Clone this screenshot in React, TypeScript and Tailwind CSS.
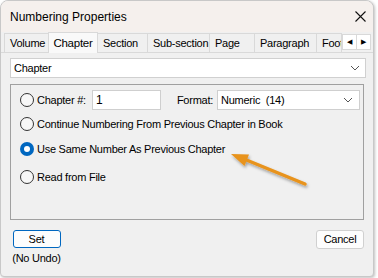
import React from "react";

const font = { fontFamily: '"Liberation Sans", Arial, sans-serif' };

function Radio({ checked }: { checked?: boolean }) {
  if (checked)
    return (
      <span className="w-[14px] h-[14px] rounded-full bg-[#0067c0] flex items-center justify-center shrink-0">
        <span className="w-[6px] h-[6px] rounded-full bg-white" />
      </span>
    );
  return <span className="w-[14px] h-[14px] rounded-full border border-[#333] bg-[#f7f7f7] shrink-0" />;
}

function Chevron() {
  return (
    <svg width="10" height="6" viewBox="0 0 10 6" className="shrink-0">
      <path d="M1 1 L5 5 L9 1" fill="none" stroke="#555" strokeWidth="1" />
    </svg>
  );
}

export default function App() {
  const tabs = [
    { t: "Volume", w: 45 },
    { t: "Chapter", w: 50, sel: true },
    { t: "Section", w: 51 },
    { t: "Sub-section", w: 63 },
    { t: "Page", w: 46 },
    { t: "Paragraph", w: 63 },
    { t: "Footnote", w: 26 },
  ];
  return (
    <div className="w-[378px] h-[278px] bg-white relative text-[11px] tracking-[-0.25px] text-black" style={font}>
      <div className="w-[374px] h-[277px] rounded-t-[8px] rounded-b-[4px] border border-[#c8c8c8] bg-[#f0f0f0] overflow-hidden flex flex-col shadow-[1px_1px_3px_rgba(0,0,0,0.25)] relative">
        {/* title bar */}
        <div className="h-[31px] bg-[#f5f0ed] flex items-center justify-between pl-[9px] pr-[7px] shrink-0">
          <span className="text-[12px] tracking-normal leading-none">Numbering Properties</span>
          <svg width="11" height="11" viewBox="0 0 11 11">
            <path d="M0.5 0.5 L10.5 10.5 M10.5 0.5 L0.5 10.5" stroke="#111" strokeWidth="1.1" />
          </svg>
        </div>
        {/* tabs */}
        <div className="relative h-[21px] shrink-0 flex items-end pl-[4px] border-b border-[#d9d9d9]">
          {tabs.map((tb) =>
            tb.sel ? (
              <div
                key={tb.t}
                style={{ width: tb.w }}
                className="h-[21px] shrink-0 -mb-px -ml-px bg-[#f9f9f9] border border-[#d9d9d9] border-b-0 flex items-start justify-center pt-[2px] overflow-hidden whitespace-nowrap relative z-10 text-[11.5px]"
              >
                {tb.t}
              </div>
            ) : (
              <div
                key={tb.t}
                style={{ width: tb.w }}
                className="h-[19px] shrink-0 bg-[#f0f0f0] border border-[#d9d9d9] border-b-0 -ml-px flex items-center pl-[5px] overflow-hidden whitespace-nowrap"
              >
                {tb.t}
              </div>
            )
          )}
          <div className="flex mb-[2px] shrink-0">
            <div className="w-[15px] h-[16px] bg-white border border-[#d9d9d9] flex items-center justify-center text-[7px]">◀</div>
            <div className="w-[15px] h-[16px] bg-white border border-[#d9d9d9] -ml-px flex items-center justify-center text-[7px]">▶</div>
          </div>
        </div>
        {/* panel */}
        <div className="flex flex-col px-[9px] pt-[5px]">
          <div className="h-[20px] w-[356px] bg-white border border-[#d0d0d0] flex items-center justify-between pl-[3px] pr-[5px]">
            <span>Chapter</span>
            <Chevron />
          </div>
          <div className="mt-[6px] w-[354px] h-[136px] border border-[#a0a0a0] flex flex-col pl-[9px] pt-[5px]">
            <div className="flex items-center h-[20px] whitespace-nowrap">
              <Radio />
              <span className="ml-[3px]">Chapter #:</span>
              <div className="ml-[6px] w-[69px] h-[20px] bg-white border border-[#cfcfcf] flex items-center pl-[3px] text-[12px]">1</div>
              <span className="ml-[16px]">Format:</span>
              <div className="ml-[4px] w-[143px] h-[20px] bg-white border border-[#cfcfcf] flex items-center justify-between pl-[3px] pr-[6px]">
                <span className="whitespace-pre">Numeric  (14)</span>
                <Chevron />
              </div>
            </div>
            <div className="flex items-center h-[14px] mt-[7px] whitespace-nowrap">
              <Radio />
              <span className="ml-[3px]">Continue Numbering From Previous Chapter in Book</span>
            </div>
            <div className="flex items-center h-[14px] mt-[11px] whitespace-nowrap">
              <Radio checked />
              <span className="ml-[3px]">Use Same Number As Previous Chapter</span>
            </div>
            <div className="flex items-center h-[14px] mt-[14px] whitespace-nowrap">
              <Radio />
              <span className="ml-[3px]">Read from File</span>
            </div>
          </div>
          <div className="flex justify-between mt-[10px]">
            <div className="flex flex-col items-center w-[52px] pl-[1px] whitespace-nowrap">
              <div className="w-[48px] h-[18px] border border-[#0067c0] rounded-[3px] bg-[#fdfdfd] flex items-center justify-center">Set</div>
              <span className="mt-[2px] leading-[16px]">(No Undo)</span>
            </div>
            <div className="w-[48px] h-[19px] border border-[#d0d0d0] rounded-[3px] bg-[#fdfdfd] flex items-center justify-center">Cancel</div>
          </div>
        </div>
        {/* annotation arrow */}
        <svg className="absolute left-0 top-0 pointer-events-none" width="374" height="277" viewBox="0 0 374 277">
          <defs>
            <filter id="sh" x="-20%" y="-50%" width="140%" height="200%">
              <feDropShadow dx="1" dy="2" stdDeviation="1.5" floodColor="#000" floodOpacity="0.35" />
            </filter>
          </defs>
          <g filter="url(#sh)">
            <line x1="304" y1="183" x2="243" y2="158" stroke="#e8931c" strokeWidth="3.5" strokeLinecap="round" />
            <polygon points="230,153 248,153.5 243.5,165" fill="#e8931c" />
          </g>
        </svg>
      </div>
    </div>
  );
}
